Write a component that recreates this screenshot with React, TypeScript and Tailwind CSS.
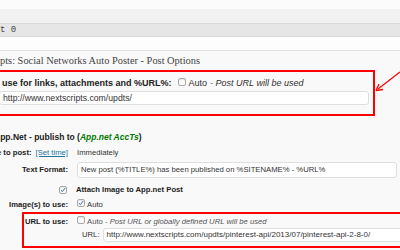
import React from "react";

const Box = ({ checked = false }: { checked?: boolean }) => (
  <span className="inline-flex h-[8px] w-[8px] shrink-0 items-center justify-center rounded-[2px] border border-[#a9a9a9] bg-[#fbfbfb] shadow-[inset_0_1px_1px_rgba(0,0,0,0.1)]">
    {checked && (
      <svg viewBox="0 0 10 10" className="h-[8px] w-[8px]">
        <path d="M1.5 5.2 L4 7.6 L8.6 1.8" fill="none" stroke="#2d5fa6" strokeWidth="1.6" />
      </svg>
    )}
  </span>
);

const Label = ({ children, w = "w-[68px]" }: { children: React.ReactNode; w?: string }) => (
  <div className={`flex shrink-0 justify-end whitespace-nowrap font-bold text-[#222] ${w}`}>{children}</div>
);

export default function App() {
  return (
    <div className="relative h-[250px] w-[400px] overflow-hidden bg-[#f9f9f9] font-['Liberation_Sans',Arial,sans-serif] text-[9px] leading-[12px] text-[#333]">
      <div className="h-[9px] bg-[#fbfbfb]" />
      <div className="h-[14px] bg-[#f1f1f1]" />
      <div className="flex h-[14px] items-center border-y border-[#d9d9d9] bg-[#e6e6e6] font-['Liberation_Mono',monospace] text-[9px] text-[#444]">
        t 0
      </div>
      <div className="h-[13px] bg-[#fdfdfd]" />

      <div className="flex h-[20px] items-center whitespace-nowrap border-t border-[#e2e2e2] bg-[#f9f9f9] pt-[1px] font-['Liberation_Serif',Georgia,serif] text-[10.4px] text-[#464646]">
        pts: Social Networks Auto Poster - Post Options
      </div>

      {/* highlighted url field */}
      <div className="-ml-[3px] h-[46px] w-[378px] border-2 border-[#ff0000] pt-[5px]">
        <div className="flex items-center whitespace-nowrap pl-[3px]">
          <span className="font-bold text-[#222]">use for links, attachments and %URL%:</span>
          <span className="ml-[6px]"><Box /></span>
          <span className="ml-[3px]">Auto</span>
          <i className="ml-[3px]">- Post URL will be used</i>
        </div>
        <div className="mt-[2px] flex h-[14px] w-[370px] items-center rounded-[3px] border border-[#dfdfdf] bg-white pl-[3px] text-[8.7px] text-[#333]">
          http://www.nextscripts.com/updts/
        </div>
      </div>

      <div className="mt-[14px] flex h-[14px] items-center whitespace-nowrap text-[8.5px] font-bold text-[#222]">
        <span className="-ml-[6px]">App.Net - publish to (</span>
        <i className="text-[#007a00]">App.net AccTs</i>
        <span>)</span>
      </div>

      <div className="text-[7.7px]">
        <div className="mt-[2px] flex h-[14px] items-center">
          <Label>
            Time to post:<span className="ml-[4px] font-normal text-[#21759b] underline">[Set time]</span>
          </Label>
          <span className="ml-[9px]">Immediately</span>
        </div>

        <div className="mt-[2px] flex h-[16px] items-center">
          <Label>Text Format:</Label>
          <div className="ml-[9px] flex h-[16px] w-[320px] items-center whitespace-nowrap rounded-[3px] border border-[#dfdfdf] bg-white pl-[3px]">
            New post (%TITLE%) has been published on %SITENAME% - %URL%
          </div>
        </div>

        <div className="mt-[5px] flex h-[14px] items-center">
          <div className="flex w-[68px] justify-end pr-[1px]"><Box checked /></div>
          <span className="ml-[8px] font-bold text-[#222]">Attach Image to App.net Post</span>
        </div>

        <div className="mt-[1px] flex h-[14px] items-center">
          <Label>Image(s) to use:</Label>
          <span className="ml-[9px]"><Box checked /></span>
          <span className="ml-[2px]">Auto</span>
        </div>

        {/* highlighted url override */}
        <div className="ml-[22px] h-[36px] w-[390px] border-2 border-[#ff0000]">
          <div className="mt-[2px] flex h-[11px] items-center">
            <Label w="w-[44px]">URL to use:</Label>
            <span className="ml-[9px]"><Box /></span>
            <i className="ml-[2px] whitespace-nowrap text-[#555]">
              <span className="not-italic">Auto</span> - Post URL or globally defined URL will be used
            </i>
          </div>
          <div className="flex h-[15px] items-center">
            <span className="ml-[58px] text-[#333]">URL:</span>
            <div className="ml-[3px] flex h-[14px] flex-1 items-center whitespace-nowrap rounded-[3px] border border-[#dfdfdf] bg-white pl-[3px] text-[8px]">
              http://www.nextscripts.com/updts/pinterest-api/2013/07/pinterest-api-2-8-0/
            </div>
          </div>
        </div>
      </div>

      <div className="mt-[1px] flex h-[14px] items-center whitespace-nowrap text-[8.5px] font-bold text-[#222]">
        <span className="-ml-[6px]">Blogger - publish to (</span>
        <i className="text-[#007a00]">Blogger</i>
        <span>)</span>
      </div>

      {/* pointer arrow */}
      <svg className="absolute left-[370px] top-[66px] h-[32px] w-[30px]" viewBox="0 0 30 32">
        <path d="M30 6 L8 23" stroke="#ff0000" strokeWidth="1.3" fill="none" />
        <path d="M6 24.5 L13 23.5 M6 24.5 L9 18" stroke="#ff0000" strokeWidth="1.3" fill="none" />
      </svg>
    </div>
  );
}
